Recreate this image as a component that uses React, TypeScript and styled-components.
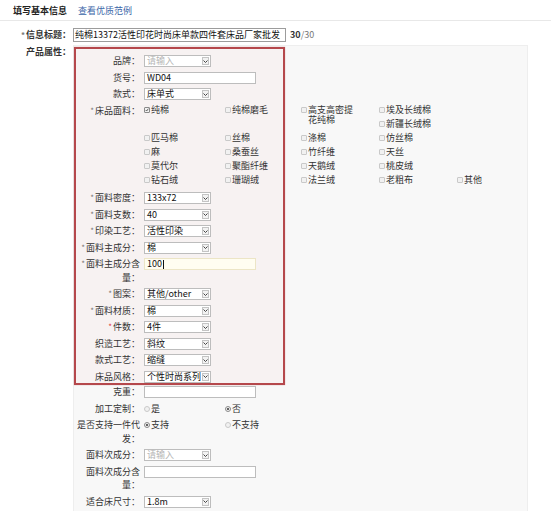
import React from "react";
import styled, { createGlobalStyle, css } from "styled-components";

const GlobalStyle = createGlobalStyle`
  html, body {
    margin: 0;
    padding: 0;
    background: #fff;
  }
  body {
    font-family: "Noto Sans CJK SC", "Liberation Sans", sans-serif;
    font-size: 9px;
    color: #333;
  }
`;

const Page = styled.div`
  width: 551px;
  height: 511px;
  overflow: hidden;
`;

const Header = styled.div`
  display: flex;
  align-items: center;
  gap: 11px;
  height: 20px;
  padding-left: 13px;
  border-bottom: 1px solid #e8e8e8;
`;

const HeaderTitle = styled.span`
  color: #222;
  font-weight: bold;
`;

const HeaderLink = styled.a`
  color: #3a66a8;
  text-decoration: none;
`;

const FormRow = styled.div<{ $top: number }>`
  display: flex;
  align-items: flex-start;
  margin-top: ${({ $top }) => $top}px;
`;

const MainLabel = styled.div`
  width: 71px;
  margin-right: 2px;
  text-align: right;
  font-weight: bold;
  color: #333;
  line-height: 14px;
  white-space: nowrap;
`;

const Star = styled.span<{ $red?: boolean }>`
  font-size: 8px;
  vertical-align: top;
  margin-right: 1px;
  color: ${({ $red }) => ($red ? "#e0383e" : "#777")};
`;

const TitleInput = styled.div`
  width: 213px;
  height: 14px;
  box-sizing: border-box;
  border: 1px solid #9c9c9c;
  padding: 0 1px;
  line-height: 12px;
  color: #111;
  white-space: nowrap;
  overflow: hidden;
`;

const Counter = styled.span`
  margin-left: 4px;
  line-height: 14px;
  color: #777;
  b {
    color: #333;
  }
`;

const Panel = styled.div`
  width: 455px;
  height: 470px;
  box-sizing: border-box;
  background: #f8f8f8;
  border: 1px solid #eeeeee;
  border-bottom: none;
`;

const Highlight = styled.div`
  width: 211px;
  box-sizing: border-box;
  margin-top: 1px;
  padding-top: 5px;
  border: 2px solid #b5484c;
  background: rgba(240, 170, 170, 0.07);
  box-shadow: 0 0 1px rgba(181, 72, 76, 0.5);
`;

const Rest = styled.div`
  padding-left: 2px;
`;

const Row = styled.div`
  display: flex;
  align-items: flex-start;
  min-height: 13.5px;
  margin-bottom: 3px;
  ${Highlight} > &:last-child {
    margin-bottom: 0;
  }
`;

const Label = styled.div`
  flex: 0 0 64px;
  margin-right: 4px;
  text-align: right;
  line-height: 13.5px;
  white-space: pre;
  color: #333;
`;

const Field = styled.div<{ $wide?: boolean; $muted?: boolean; $soft?: boolean }>`
  ${({ $wide, $muted, $soft }) => {
    return css`
      display: flex;
      align-items: center;
      width: ${$wide ? "112px" : "67px"};
      height: 12px;
      margin-top: 1px;
      box-sizing: border-box;
      padding-left: 2px;
      border: 1px solid ${$soft ? "#ece5c6" : "#bdbdbd"};
      background: ${$soft ? "#fffdf1" : "#fff"};
      color: ${$muted ? "#b5b5b5" : "#111"};
      line-height: 10px;
      white-space: nowrap;
    `;
  }}
`;

const Arrow = styled.span`
  display: flex;
  align-items: center;
  justify-content: center;
  margin-left: auto;
  margin-right: 1px;
  width: 7px;
  height: 8px;
  box-sizing: border-box;
  border: 1px solid #c4c4c4;
  background: #f2f2f2;
`;

const Caret = styled.span`
  display: inline-block;
  width: 1px;
  height: 9px;
  margin-left: 1px;
  background: #111;
`;

const CheckGrid = styled.div`
  display: grid;
  grid-template-columns: 81px 76px 78px 78px 60px;
  grid-auto-rows: 10px;
  row-gap: 4px;
  padding: 1.5px 0 3px;
`;

const Option = styled.label<{ $col: number; $row: number; $tall?: boolean }>`
  display: flex;
  align-items: flex-start;
  gap: 1px;
  grid-column: ${({ $col }) => $col};
  grid-row: ${({ $row, $tall }) => `${$row} / span ${$tall ? 2 : 1}`};
  line-height: 10px;
  color: #333;
  span {
    max-width: 48px;
  }
`;

const Box = styled.i<{ $round?: boolean; $on?: boolean }>`
  flex: 0 0 6px;
  display: flex;
  align-items: center;
  justify-content: center;
  width: 6px;
  height: 6px;
  margin-top: 2px;
  box-sizing: border-box;
  border: 1px solid ${({ $on }) => ($on ? "#8a8a8a" : "#c9c9c9")};
  border-radius: ${({ $round }) => ($round ? "50%" : "1px")};
  background: #f1f1f1;
`;

const Dot = styled.b`
  width: 2px;
  height: 2px;
  border-radius: 50%;
  background: #333;
`;

const RadioGroup = styled.div`
  display: grid;
  grid-template-columns: 81px 76px;
  padding-top: 2px;
`;

function Chevron() {
  return (
    <svg width="5" height="3" viewBox="0 0 5 3">
      <path d="M0.5 0.5 L2.5 2.5 L4.5 0.5" fill="none" stroke="#444" strokeWidth="1" />
    </svg>
  );
}

function Tick() {
  return (
    <svg width="6" height="6" viewBox="0 0 6 6">
      <path d="M1 3 L2.5 4.5 L5 1" fill="none" stroke="#222" strokeWidth="1" />
    </svg>
  );
}

type FieldSpec =
  | { kind: "select"; value: string; muted?: boolean }
  | { kind: "input"; value?: string; soft?: boolean; caret?: boolean }
  | { kind: "radio"; options: string[]; checked: number };

interface RowSpec {
  label: string;
  star?: boolean;
  redStar?: boolean;
  field: FieldSpec;
}

const boxRows: RowSpec[] = [
  { label: "品牌：", field: { kind: "select", value: "请输入", muted: true } },
  { label: "货号：", field: { kind: "input", value: "WD04" } },
  { label: "款式：", field: { kind: "select", value: "床单式" } },
];

const boxRowsAfter: RowSpec[] = [
  { label: "面料密度：", star: true, field: { kind: "select", value: "133x72" } },
  { label: "面料支数：", star: true, field: { kind: "select", value: "40" } },
  { label: "印染工艺：", star: true, field: { kind: "select", value: "活性印染" } },
  { label: "面料主成分：", star: true, field: { kind: "select", value: "棉" } },
  {
    label: "面料主成分含\n量：",
    star: true,
    field: { kind: "input", value: "100", soft: true, caret: true },
  },
  { label: "图案：", star: true, field: { kind: "select", value: "其他/other" } },
  { label: "面料材质：", star: true, field: { kind: "select", value: "棉" } },
  { label: "件数：", star: true, redStar: true, field: { kind: "select", value: "4件" } },
  { label: "织造工艺：", field: { kind: "select", value: "斜纹" } },
  { label: "款式工艺：", field: { kind: "select", value: "缩缝" } },
  { label: "床品风格：", field: { kind: "select", value: "个性时尚系列" } },
];

const restRows: RowSpec[] = [
  { label: "克重：", field: { kind: "input" } },
  { label: "加工定制：", field: { kind: "radio", options: ["是", "否"], checked: 1 } },
  {
    label: "是否支持一件代\n发：",
    field: { kind: "radio", options: ["支持", "不支持"], checked: 0 },
  },
  { label: "面料次成分：", field: { kind: "select", value: "请输入", muted: true } },
  { label: "面料次成分含\n量：", field: { kind: "input" } },
  { label: "适合床尺寸：", field: { kind: "select", value: "1.8m" } },
];

const fabrics: (string | null)[][] = [
  ["纯棉", "纯棉磨毛", "高支高密提花纯棉", "埃及长绒棉"],
  [null, null, null, "新疆长绒棉"],
  ["匹马棉", "丝棉", "涤棉", "仿丝棉"],
  ["麻", "桑蚕丝", "竹纤维", "天丝"],
  ["莫代尔", "聚酯纤维", "天鹅绒", "桃皮绒"],
  ["钻石绒", "珊瑚绒", "法兰绒", "老粗布", "其他"],
];

function FieldView({ field }: { field: FieldSpec }) {
  if (field.kind === "select") {
    return (
      <Field $muted={field.muted}>
        {field.value}
        <Arrow>
          <Chevron />
        </Arrow>
      </Field>
    );
  }
  if (field.kind === "input") {
    return (
      <Field $wide $soft={field.soft}>
        {field.value}
        {field.caret && <Caret />}
      </Field>
    );
  }
  return (
    <RadioGroup>
      {field.options.map((option, i) => (
        <Option key={option} $col={i + 1} $row={1}>
          <Box $round $on={i === field.checked}>
            {i === field.checked && <Dot />}
          </Box>
          <span>{option}</span>
        </Option>
      ))}
    </RadioGroup>
  );
}

function FormLine({ label, star, redStar, field }: RowSpec) {
  return (
    <Row>
      <Label>
        {star && <Star $red={redStar}>*</Star>}
        {label}
      </Label>
      <FieldView field={field} />
    </Row>
  );
}

function App() {
  return (
    <Page>
      <GlobalStyle />
      <Header>
        <HeaderTitle>填写基本信息</HeaderTitle>
        <HeaderLink>查看优质范例</HeaderLink>
      </Header>
      <FormRow $top={7}>
        <MainLabel>
          <Star>*</Star>信息标题：
        </MainLabel>
        <TitleInput>纯棉13372活性印花时尚床单款四件套床品厂家批发</TitleInput>
        <Counter>
          <b>30</b>/30
        </Counter>
      </FormRow>
      <FormRow $top={3}>
        <MainLabel>产品属性：</MainLabel>
        <Panel>
          <Highlight>
            {boxRows.map((row) => (
              <FormLine key={row.label} {...row} />
            ))}
            <Row>
              <Label>
                <Star>*</Star>床品面料：
              </Label>
              <CheckGrid>
                {fabrics.map((line, r) =>
                  line.map((name, c) =>
                    name ? (
                      <Option key={name} $col={c + 1} $row={r + 1} $tall={name.length > 5}>
                        <Box $on={name === "纯棉"}>{name === "纯棉" && <Tick />}</Box>
                        <span>{name}</span>
                      </Option>
                    ) : null
                  )
                )}
              </CheckGrid>
            </Row>
            {boxRowsAfter.map((row) => (
              <FormLine key={row.label} {...row} />
            ))}
          </Highlight>
          <Rest>
            {restRows.map((row) => (
              <FormLine key={row.label} {...row} />
            ))}
          </Rest>
        </Panel>
      </FormRow>
    </Page>
  );
}

export default App;
